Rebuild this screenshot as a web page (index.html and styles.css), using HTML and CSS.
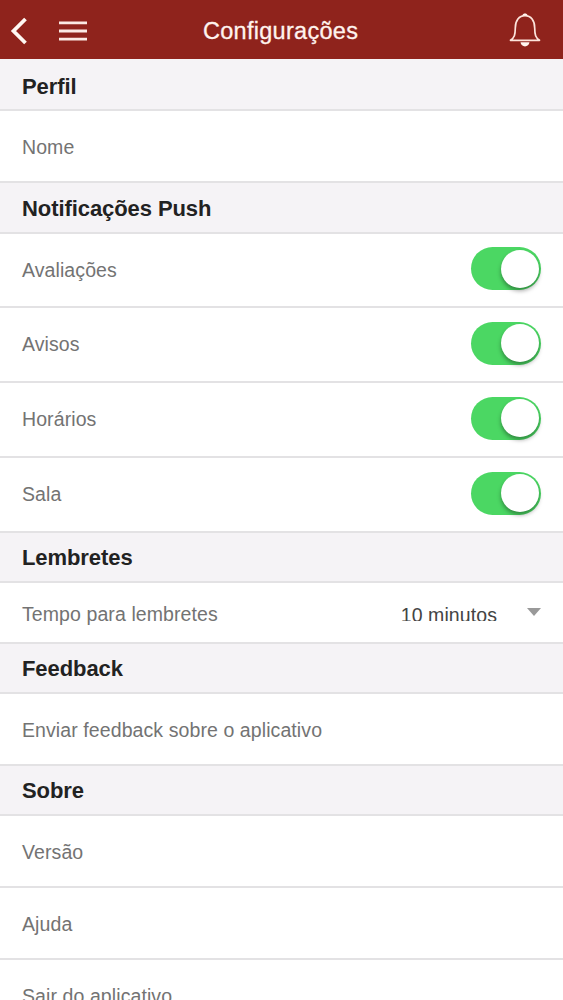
FILE: index.html
```html
<!DOCTYPE html>
<html lang="pt-BR">
<head>
<meta charset="utf-8">
<title>Configurações</title>
<link rel="stylesheet" href="styles.css">
</head>
<body>
<div class="screen">
  <header class="bar">
    <svg class="back" width="18" height="28" viewBox="0 0 18 28"><path d="M16.500 2 L4.500 14 L16.500 26" fill="none" stroke="#fff7f2" stroke-width="3.800"/></svg>
    <svg class="menu" width="28" height="22" viewBox="0 0 28 22"><path d="M0 2.800H28M0 11H28M0 19.200H28" stroke="#fbe9e4" stroke-width="2.800"/></svg>
    <h1 class="title">Configurações</h1>
    <svg class="bell" width="34" height="36" viewBox="0 0 34 36"><path d="M2.500 28.300C6.500 25.500 7.200 23 7.300 16C7.300 8.500 11 3.600 17 3.600S26.700 8.500 26.700 16C26.800 23 27.500 25.500 31.500 28.300Z" fill="none" stroke="#fde4dc" stroke-width="1.700" stroke-linejoin="round"/><path d="M14.500 3.200C14.700 .800 19.300 .800 19.500 3.200ZM12.500 30.300H21.500C21 35.800 13 35.800 12.500 30.300Z" fill="#fff5ef"/></svg>
  </header>
  <main>
    <h2 class="section first">Perfil</h2>
    <div class="row">Nome</div>
    <h2 class="section tall">Notificações Push</h2>
    <div class="row toggle-row compact">Avaliações<span class="switch"></span></div>
    <div class="row toggle-row">Avisos<span class="switch"></span></div>
    <div class="row toggle-row">Horários<span class="switch"></span></div>
    <div class="row toggle-row">Sala<span class="switch"></span></div>
    <h2 class="section">Lembretes</h2>
    <div class="row select-row">Tempo para lembretes<span class="value">10 minutos</span><span class="caret"></span></div>
    <h2 class="section">Feedback</h2>
    <div class="row">Enviar feedback sobre o aplicativo</div>
    <h2 class="section">Sobre</h2>
    <div class="row">Versão</div>
    <div class="row">Ajuda</div>
    <div class="row">Sair do aplicativo</div>
  </main>
</div>
</body>
</html>
```
FILE: styles.css
```css
* { box-sizing: border-box; }
body {
  margin: 0;
  background: #fff;
  font-family: "Liberation Sans", Arial, sans-serif;
}
.screen { height: 1000px; overflow: hidden; }
.bar {
  display: flex;
  align-items: center;
  height: 59px;
  padding: 2px 21px 0 9px;
  background: #8f231c;
}
.back { margin-right: 32px; }
.title {
  flex: 1;
  margin: 0 0 0 116px;
  color: #fff3ee;
  font-size: 23.5px;
  font-weight: 400;
  line-height: 28px;
  letter-spacing: 0.28px;
  -webkit-text-stroke: 0.3px #fff3ee;
}
.bell { margin-bottom: 1px; }
.section {
  height: 50px;
  margin: 0;
  padding: 0 22px;
  border-bottom: 2px solid #e3e2e4;
  background: #f5f3f6;
  color: #222;
  font-size: 22px;
  font-weight: 700;
  line-height: 50px;
  letter-spacing: -0.08px;
}
.first { height: 52px; line-height: 55px; }
.tall { height: 51px; line-height: 51px; }
.row {
  display: flex;
  align-items: center;
  height: 72px;
  padding: 1px 22px 0;
  border-bottom: 2px solid #e3e2e4;
  color: #737373;
  font-size: 19.5px;
  line-height: 24px;
  letter-spacing: 0.09px;
}
.toggle-row { height: 75px; padding-top: 0; padding-bottom: 1px; }
.compact { height: 74px; padding-bottom: 1px; }
.switch {
  display: flex;
  justify-content: flex-end;
  width: 70px;
  height: 43px;
  margin-left: auto;
  margin-bottom: 2px;
  padding: 2.5px 2px;
  border-radius: 22px;
  background: #4bd763;
}
.switch::after {
  content: "";
  width: 38px;
  height: 38px;
  border-radius: 50%;
  background: #fff;
  box-shadow: 0 3px 4px rgba(0, 0, 0, 0.35);
}
.select-row { height: 61px; padding-top: 3px; }
.value {
  height: 15px;
  margin-left: auto;
  margin-bottom: 1px;
  overflow: hidden;
  color: #444;
  line-height: 19px;
}
.caret {
  margin: 0 0 4px 30px;
  border: 7px solid transparent;
  border-top: 8px solid #999;
  border-bottom: 0;
}
```
